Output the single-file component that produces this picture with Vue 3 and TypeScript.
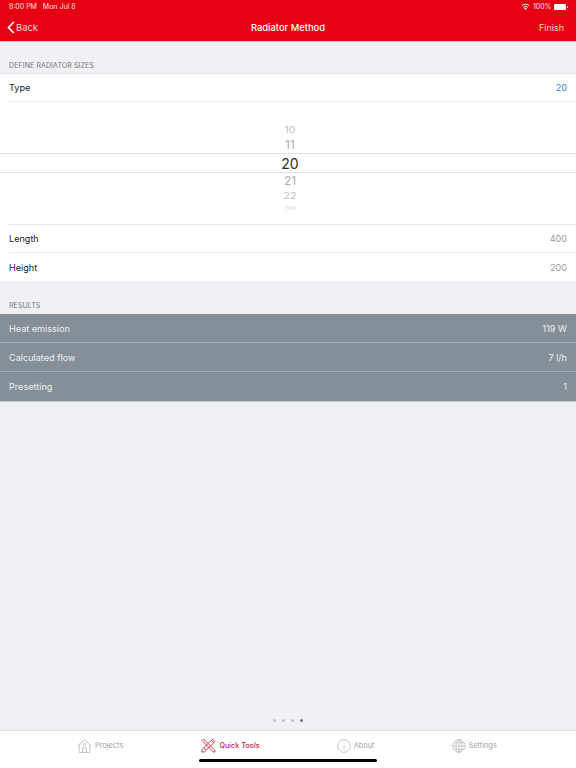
<template>
  <div class="screen">
    <header class="navbar">
      <div class="status">
        <span>8:00 PM&nbsp;&nbsp; Mon Jul 8</span>
        <div class="status-right">
          <svg width="9" height="7" viewBox="0 0 18 14">
            <path d="M9 14 L6.2 10.6 A4.4 4.4 0 0 1 11.8 10.6 Z" fill="#fff" />
            <path d="M4.4 8.6 A7.2 7.2 0 0 1 13.6 8.6" fill="none" stroke="#fff" stroke-width="2" />
            <path d="M1.6 5.4 A11.4 11.4 0 0 1 16.4 5.4" fill="none" stroke="#fff" stroke-width="2" />
          </svg>
          <span>100%</span>
          <span class="battery"><i></i></span>
        </div>
      </div>
      <div class="nav-row">
        <div class="back">
          <svg width="8" height="13" viewBox="0 0 8 13">
            <path d="M6.8 1 L1.5 6.5 L6.8 12" fill="none" stroke="#fff" stroke-width="1.7" />
          </svg>
          <span>Back</span>
        </div>
        <div class="nav-title">Radiator Method</div>
        <div class="finish">Finish</div>
      </div>
    </header>

    <main class="content">
      <div class="section-label first">DEFINE RADIATOR SIZES</div>
      <section class="group">
        <div class="row inset short">
          <span>Type</span>
          <span class="blue">20</span>
        </div>
        <div class="picker">
          <div class="picker-band"></div>
          <span
            v-for="item in wheel"
            :key="item.label"
            class="wheel-item"
            :class="item.cls"
            :style="{ top: `${item.y - 7}px` }"
          >{{ item.label }}</span>
        </div>
        <div class="row inset top-line short">
          <span>Length</span>
          <span class="muted">400</span>
        </div>
        <div class="row">
          <span>Height</span>
          <span class="muted">200</span>
        </div>
      </section>

      <div class="section-label second">RESULTS</div>
      <section class="results">
        <div v-for="r in results" :key="r.label" class="result-row">
          <span>{{ r.label }}</span>
          <span>{{ r.value }}</span>
        </div>
      </section>

      <div class="dots">
        <i v-for="n in 4" :key="n" :class="{ on: n === 4 }"></i>
      </div>
    </main>

    <footer class="tabbar">
      <div class="tabs">
        <div class="tab first-tab">
          <svg width="15" height="14" viewBox="0 0 15 14" fill="none" stroke="#a9a9a9" stroke-width="0.7">
            <path d="M0.6 6.6 L7.5 0.8 L14.4 6.6" />
            <path d="M2.2 5.8 V13.4 H12.8 V5.8" />
            <path d="M5.6 13.4 V8.8 H9.4 V13.4" />
            <circle cx="7.5" cy="5.6" r="1.2" />
          </svg>
          <span>Projects</span>
        </div>
        <div class="tab active">
          <svg width="15" height="15" viewBox="0 0 15 15" fill="none" stroke="#c4283f" stroke-width="0.9">
            <path d="M1 2.6 L2.6 1 L14 12.4 L14 14 L12.4 14 Z" />
            <path d="M14 3.4 L11.6 1 L1 11.6 L1 14 L3.4 14 Z" />
            <path d="M10.4 2.4 L12.6 4.6 M3 10 L5 12" />
          </svg>
          <span>Quick Tools</span>
        </div>
        <div class="tab">
          <svg width="14" height="14" viewBox="0 0 14 14" fill="none" stroke="#a9a9a9" stroke-width="0.7">
            <circle cx="7" cy="7" r="6.3" />
            <path d="M7 6 V10.6 M7 3.4 V4.4" />
          </svg>
          <span>About</span>
        </div>
        <div class="tab">
          <svg width="14" height="14" viewBox="0 0 14 14" fill="none" stroke="#a9a9a9" stroke-width="0.6">
            <circle cx="7" cy="7" r="6.3" />
            <ellipse cx="7" cy="7" rx="3" ry="6.3" />
            <path d="M7 0.7 V13.3 M0.7 7 H13.3 M1.6 3.8 H12.4 M1.6 10.2 H12.4" />
          </svg>
          <span>Settings</span>
        </div>
      </div>
      <div class="home-bar"></div>
    </footer>
  </div>
</template>

<script setup lang="ts">
// y is the centre of the number inside the picker
const wheel = [
  { label: '10', cls: 'far', y: 29 },
  { label: '11', cls: 'near', y: 43 },
  { label: '20', cls: 'current', y: 62 },
  { label: '21', cls: 'near', y: 78.5 },
  { label: '22', cls: 'far', y: 95 },
  { label: '30', cls: 'edge', y: 106 },
];

const results = [
  { label: 'Heat emission', value: '119 W' },
  { label: 'Calculated flow', value: '7 l/h' },
  { label: 'Presetting', value: '1' },
];
</script>

<style>
html,
body {
  margin: 0;
  background: #f0f1f5;
}
</style>

<style scoped>
.screen {
  width: 576px;
  height: 768px;
  display: flex;
  flex-direction: column;
  overflow: hidden;
  background: #f0f1f5;
  font-family: Inter, "Liberation Sans", sans-serif;
  color: #1c1c1e;
}

.navbar {
  height: 42px;
  flex: none;
  background: #e60012;
  color: #fff;
  box-sizing: border-box;
  padding: 0 9px;
  border-bottom: 1px solid #e4b9be;
}

.status {
  height: 13px;
  display: flex;
  justify-content: space-between;
  align-items: center;
  font-size: 7px;
  line-height: 13px;
  color: #fde3e5;
}

.status-right {
  display: flex;
  align-items: center;
  gap: 2.5px;
}

.battery {
  display: block;
  width: 12px;
  height: 6px;
  margin-right: 1px;
  background: #fff;
  border-radius: 1px;
  position: relative;
}

.battery i {
  position: absolute;
  right: -2px;
  top: 2px;
  width: 1px;
  height: 2px;
  background: #fbb;
}

.nav-row {
  height: 29px;
  display: grid;
  grid-template-columns: 1fr auto 1fr;
  align-items: center;
  font-size: 9.4px;
}

.back {
  display: flex;
  align-items: center;
  gap: 1px;
  margin-left: -2px;
  color: #fbd4d7;
}

.nav-title {
  font-weight: 500;
  font-size: 9.4px;
}

.finish {
  justify-self: end;
  margin-right: 3px;
  font-size: 9px;
  color: #fbd4d7;
}

.content {
  flex: 1;
  display: flex;
  flex-direction: column;
  min-height: 0;
}

.section-label {
  font-size: 7px;
  line-height: 10px;
  letter-spacing: 0.1px;
  color: #74747a;
  padding-left: 9px;
}

.section-label.first {
  padding-top: 19px;
  padding-bottom: 2px;
}

.section-label.second {
  padding-top: 18px;
  padding-bottom: 3px;
}

.group {
  background: #fff;
  border-top: 1px solid #e6e6ea;
  border-bottom: 1px solid #e6e6ea;
  padding-bottom: 1px;
}

.row {
  height: 28px;
  margin-left: 9px;
  padding-right: 9px;
  display: flex;
  justify-content: space-between;
  align-items: center;
  font-size: 9.1px;
}

.row.short {
  height: 27px;
}

.inset {
  border-bottom: 1px solid #ececef;
}

.top-line {
  border-top: 1px solid #e6e6ea;
}

.blue {
  color: #2f86d0;
}

.muted {
  color: #9a9a9e;
}

.picker {
  height: 122px;
  position: relative;
  overflow: hidden;
}

.picker-band {
  position: absolute;
  left: 0;
  right: 0;
  top: 51px;
  height: 18px;
  border-top: 1px solid #e3e3e6;
  border-bottom: 1px solid #e3e3e6;
}

.wheel-item {
  position: absolute;
  left: 230px;
  width: 120px;
  height: 14px;
  text-align: center;
  line-height: 14px;
}

.wheel-item.far {
  font-size: 10.5px;
  color: #bdbdbf;
  transform: scaleY(0.82);
}

.wheel-item.near {
  font-size: 12px;
  color: #aeaeb0;
}

.wheel-item.current {
  font-size: 14px;
  color: #2a2a2c;
}

.wheel-item.edge {
  font-size: 9px;
  color: #dcdcde;
  transform: scaleY(0.55);
}

.results {
  background: #858f97;
  color: #eef0f1;
  padding-bottom: 1px;
  border-bottom: 1px solid #c9ced2;
}

.result-row {
  height: 28px;
  padding: 0 9px;
  display: flex;
  justify-content: space-between;
  align-items: center;
  font-size: 9.1px;
  border-bottom: 1px solid #a3abb1;
}

.result-row:last-child {
  border-bottom: 0;
}

.dots {
  margin-top: auto;
  margin-bottom: 8px;
  display: flex;
  justify-content: center;
  gap: 5.5px;
}

.dots i {
  width: 3.5px;
  height: 3.5px;
  border-radius: 50%;
  background: #c3c5c9;
}

.dots i.on {
  background: #6d7278;
}

.tabbar {
  height: 37px;
  flex: none;
  background: #fff;
  border-top: 1px solid #dcdde0;
  position: relative;
}

.tabs {
  display: flex;
  gap: 77px;
  padding-left: 77px;
  padding-top: 7px;
}

.tab {
  display: flex;
  align-items: center;
  gap: 3px;
  font-size: 7.4px;
  color: #a3a3a6;
  height: 15px;
}

.first-tab {
  margin-right: 1px;
}

.tab.active {
  color: #c4283f;
  font-size: 7.2px;
  font-weight: 500;
}

.home-bar {
  position: absolute;
  left: 199px;
  top: 28px;
  width: 178px;
  height: 3px;
  border-radius: 2px;
  background: #000;
}
</style>
